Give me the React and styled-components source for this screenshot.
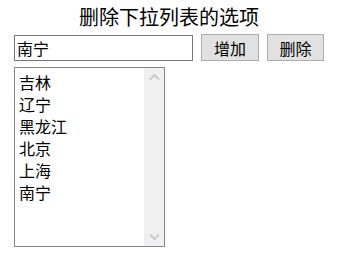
import React, { useState } from "react";
import styled, { createGlobalStyle } from "styled-components";

const GlobalStyle = createGlobalStyle`
  html, body {
    margin: 0;
    padding: 0;
    background: #ffffff;
  }
  body {
    font-family: "Noto Sans CJK SC", "Noto Sans", sans-serif;
    color: #000000;
  }
`;

const Page = styled.div`
  width: 357px;
  height: 262px;
  padding: 4px 0 0 14px;
  box-sizing: border-box;
`;

const Title = styled.h1`
  margin: 0;
  width: 310px;
  text-align: center;
  font-size: 20px;
  font-weight: normal;
  line-height: 26px;
`;

const Toolbar = styled.div`
  display: flex;
  align-items: center;
  margin-top: 4px;
  gap: 8px;
`;

const TextInput = styled.input`
  width: 179px;
  height: 26px;
  box-sizing: border-box;
  border: 1px solid #767676;
  padding: 0 2px;
  margin: 0;
  font-family: inherit;
  font-size: 16px;
  line-height: 24px;
  outline: none;
`;

const Button = styled.button`
  height: 27px;
  width: ${(p) => p.$width}px;
  box-sizing: border-box;
  margin: 0;
  padding: 0;
  background: #e1e1e1;
  border: 1px solid #adadad;
  font-family: inherit;
  font-size: 16px;
  line-height: 24px;
  color: #000;
`;

const ListBox = styled.div`
  margin-top: 6px;
  width: 151px;
  height: 180px;
  box-sizing: border-box;
  border: 1px solid #828790;
  display: flex;
`;

const Options = styled.div`
  flex: 1;
  padding: 3px 0 0 4px;
`;

const Option = styled.div`
  font-size: 16px;
  line-height: 22px;
  white-space: nowrap;
`;

const ScrollTrack = styled.div`
  width: 20px;
  background: #f0f0f0;
  display: flex;
  flex-direction: column;
  justify-content: space-between;
  align-items: center;
  padding: 5px 0;
`;

const Arrow = ({ down }) => (
  <svg width="11" height="8" viewBox="0 0 11 8">
    <path
      d={down ? "M1 1.5 L5.5 6 L10 1.5" : "M1 6.5 L5.5 2 L10 6.5"}
      fill="none"
      stroke="#c2c2c2"
      strokeWidth="1.6"
    />
  </svg>
);

export default function App() {
  const [value, setValue] = useState("南宁");
  const [items] = useState(["吉林", "辽宁", "黑龙江", "北京", "上海", "南宁"]);

  return (
    <Page>
      <GlobalStyle />
      <Title>删除下拉列表的选项</Title>
      <Toolbar>
        <TextInput value={value} onChange={(e) => setValue(e.target.value)} />
        <Button $width={58}>增加</Button>
        <Button $width={57}>删除</Button>
      </Toolbar>
      <ListBox>
        <Options>
          {items.map((item) => (
            <Option key={item}>{item}</Option>
          ))}
        </Options>
        <ScrollTrack>
          <Arrow />
          <Arrow down />
        </ScrollTrack>
      </ListBox>
    </Page>
  );
}
